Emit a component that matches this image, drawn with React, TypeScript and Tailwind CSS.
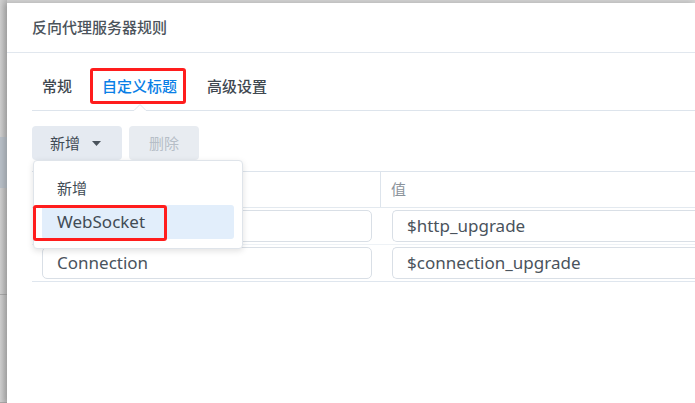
import React from 'react';

const font = { fontFamily: '"Noto Sans", "Noto Sans CJK SC", sans-serif' };

const Caret: React.FC = () => (
  <svg width="9" height="5" viewBox="0 0 9 5" className="ml-[12px] mt-[1px]">
    <path d="M0 0h9L4.5 5z" fill="#4a535c" />
  </svg>
);

interface HeaderRow {
  name: string;
  value: string;
}

// first name is hidden under the open dropdown
const rows: HeaderRow[] = [
  { name: '', value: '$http_upgrade' },
  { name: 'Connection', value: '$connection_upgrade' },
];

const App: React.FC = () => {
  return (
    <div
      className="w-[695px] h-[403px] overflow-hidden flex bg-[#d3d3d3] antialiased"
      style={font}
    >
      {/* backdrop strip on the left */}
      <div className="w-[7px] shrink-0 flex flex-col bg-gradient-to-r from-[#d0d0d0] to-[#bdbdbd]">
        <div className="h-[137px]" />
        <div className="h-[51px] bg-[#b9c0c8]" />
        <div className="h-[108px] border-b border-[#a9a9a9]" />
        <div className="h-[108px] border-b border-[#a9a9a9]" />
      </div>

      <div className="flex-1 mt-[3px] bg-white shadow-[-3px_0_6px_rgba(0,0,0,0.18)] flex flex-col">
        {/* header */}
        <div className="h-[50px] shrink-0 flex items-center pl-[25px] border-b border-[#e1e7ee]">
          <span className="text-[15px] font-medium text-[#4b535b]">反向代理服务器规则</span>
        </div>

        <div className="pl-[25px] flex flex-col">
          {/* tabs */}
          <div className="relative h-[58px] flex items-center gap-[30px] pl-[10px] border-b border-[#dde4ec]">
            <span className="text-[15px] font-medium text-[#3f4850] mt-[10px]">常规</span>
            <span className="relative text-[15px] font-medium text-[#0a7fe6] mt-[10px]">
              自定义标题
              <span className="absolute left-[-12px] right-[-9px] top-[-7px] bottom-[-6px] border-[3px] border-[#ff1d1d] rounded-[3px]" />
            </span>
            <span className="text-[15px] font-medium text-[#3f4850] mt-[10px]">高级设置</span>
            <span className="absolute left-[102px] bottom-[-1px] w-[12px] h-[7px] bg-white">
              <svg width="12" height="7" viewBox="0 0 12 7" className="block">
                <path d="M0 6.5L6 0.5 12 6.5" fill="none" stroke="#dde4ec" strokeWidth="1" />
              </svg>
            </span>
          </div>

          {/* toolbar */}
          <div className="relative mt-[15px] flex gap-[7px]">
            <button className="w-[90px] h-[34px] rounded-[4px] bg-[#e5eaf1] flex items-center pl-[18px] text-[15px] text-[#414b55]">
              新增
              <Caret />
            </button>
            <button className="w-[70px] h-[34px] rounded-[4px] bg-[#e8ecf1] text-[15px] text-[#b6bec7]">删除</button>

            {/* dropdown */}
            <div className="absolute left-[1px] top-[34px] z-10 w-[210px] h-[89px] bg-white border border-[#dfe4ea] rounded-[4px] shadow-[0_2px_6px_rgba(0,0,0,0.12)] flex flex-col pt-[10px] px-[8px]">
              <div className="h-[34px] flex items-center pl-[15px] text-[15px] text-[#414b55]">新增</div>
              <div className="relative h-[34px] flex items-center pl-[15px] rounded-[3px] bg-[#e2eefb] text-[17px] text-[#414b55]">
                WebSocket
                <span className="absolute left-[-9px] top-0 w-[134px] h-[36px] border-[3px] border-[#ff1d1d] rounded-[3px]" />
              </div>
            </div>
          </div>

          {/* table */}
          <div className="mt-[11px] border-t border-[#dde4ec] flex flex-col">
            <div className="h-[36px] grid grid-cols-[349px_1fr] border-b border-[#e3e9ef]">
              <div className="border-r border-[#dde4ec]" />
              <div className="flex items-center pl-[10px] text-[15px] text-[#8b939b]">值</div>
            </div>
            {rows.map((row, i) => (
              <div
                key={row.value}
                className={`h-[37px] grid grid-cols-[359px_1fr] items-center ${i === 0 ? 'border-b border-[#eef2f6]' : 'border-b border-[#dfe6ee]'}`}
              >
                <div className="pl-[10px]">
                  <div className="h-[32px] w-[330px] border border-[#d9dfe6] rounded-[5px] flex items-center pl-[14px] text-[17px] text-[#4a535c]">
                    {row.name}
                  </div>
                </div>
                <div className="pl-[1px]">
                  <div className="h-[32px] border border-r-0 border-[#d9dfe6] rounded-l-[5px] flex items-center pl-[14px] text-[17px] text-[#4a535c]">
                    {row.value}
                  </div>
                </div>
              </div>
            ))}
          </div>
        </div>
      </div>
    </div>
  );
};

export default App;
